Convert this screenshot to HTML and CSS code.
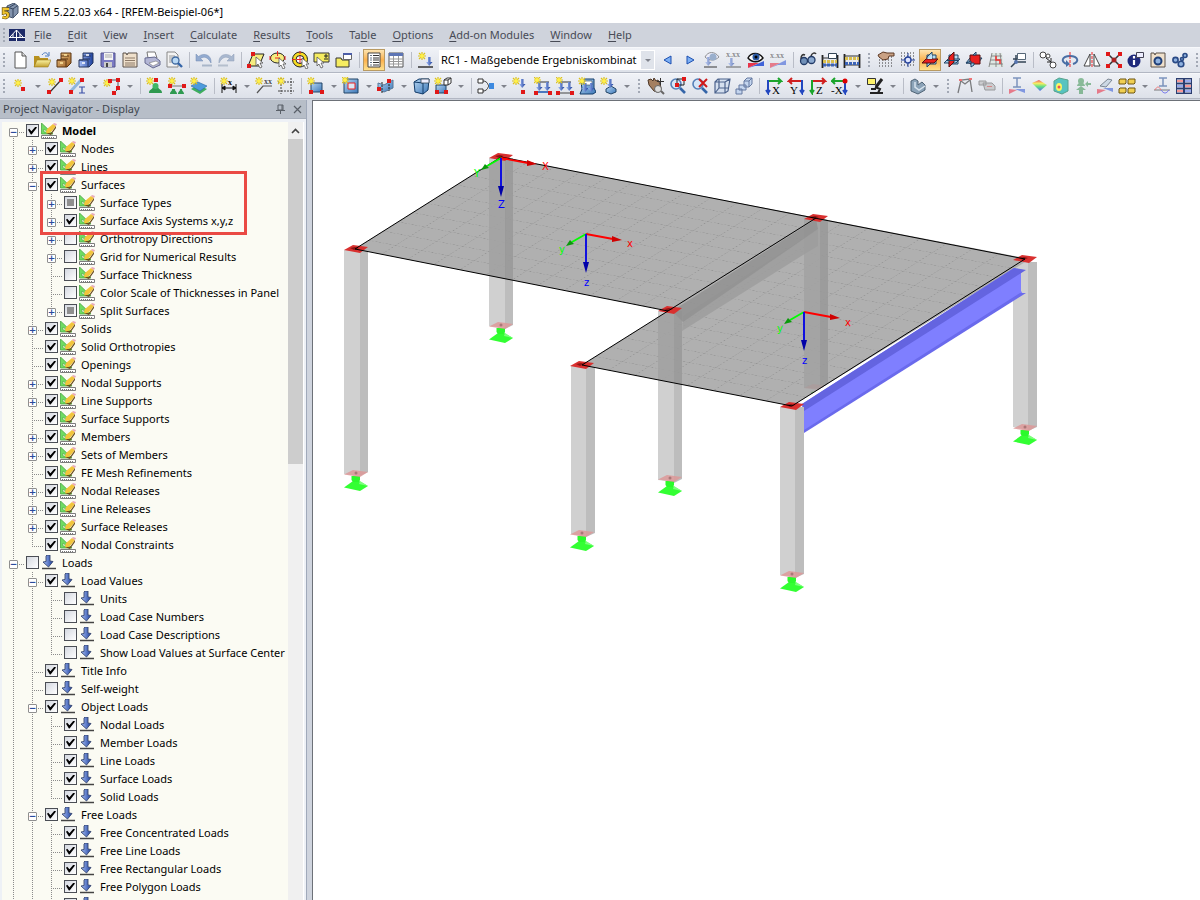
FILE: index.html
```html
<!DOCTYPE html>
<html lang="en">
<head>
<meta charset="utf-8">
<title>RFEM 5.22.03 x64 - [RFEM-Beispiel-06*]</title>
<link rel="stylesheet" href="styles.css">
</head>
<body>
<svg class="defs" aria-hidden="true">
  <defs>
    <linearGradient id="gb" x2="1" y2="1"><stop stop-color="#b5d6f3"/><stop offset="1" stop-color="#3d78b8"/></linearGradient>
    <linearGradient id="gy" x2="0" y2="1"><stop stop-color="#fbf3a0"/><stop offset="1" stop-color="#c2a02e"/></linearGradient>
    <linearGradient id="go" x2="1" y2="1"><stop stop-color="#f0c98c"/><stop offset="1" stop-color="#9a5c1c"/></linearGradient>
    <linearGradient id="ga" x2="1" y2="0"><stop stop-color="#a9c1fa"/><stop offset="1" stop-color="#1c3f9c"/></linearGradient>
    <linearGradient id="rb" x2="0" y2="1"><stop stop-color="#e23"/><stop offset=".3" stop-color="#fe3"/><stop offset=".6" stop-color="#3d6"/><stop offset="1" stop-color="#24e"/></linearGradient>
    <pattern id="mesh" width="26.7" height="17.3" patternUnits="userSpaceOnUse" patternTransform="matrix(.982 .19 -.846 .533 501 157)">
      <path d="M0 .5H27M.5 0V18" stroke="#949494" stroke-width="1" stroke-dasharray="1.5 2" fill="none"/>
    </pattern>
    <clipPath id="slabclip"><path d="M501 157L1030 259L792 406L582 365L668 311L355 249Z"/></clipPath>
    <symbol id="st" overflow="visible"><path d="M4 0v8M0 4h8M1 1l6 6M7 1L1 7" stroke="#dcc21a" stroke-width="1.2"/><circle cx="4" cy="4" r="2" fill="#fff04a"/></symbol>
    <symbol id="nd" overflow="visible"><path d="M-2-2h4v4h-4z" fill="#e01818"/></symbol>
    <symbol id="cur" overflow="visible"><path d="M0 0v9l2-2 2 4 2-1-2-4h3z" fill="#fff" stroke="#555" stroke-width=".8"/></symbol>
    <symbol id="dn" overflow="visible"><path d="M-1 0h2.500v5H3.500L.2 9-3 5h2z" fill="url(#ga)"/></symbol>
    <symbol id="draw" viewBox="0 0 16 16"><path d="M.5 0v11H12z" fill="#6fdc63" stroke="#49a542" stroke-width=".8"/><path d="M3 6v3h3.500z" fill="#fbfbf3" stroke="#49a542" stroke-width=".6"/><path d="M5 9l1-3 6-5 3 2-5 6-4 2z" fill="#f2c53c"/><path d="M5 10l5 0 5-7 0 2-5 7z" fill="#6b4c1c"/><path d="M12 1l1-1 3 1-1 2z" fill="#e7a6b8"/><path d="M.5 12.500h15v3H.5z" fill="#fff" stroke="#7d7d7d"/><path d="M2 14.500h12" stroke="#777" stroke-dasharray="1 1"/></symbol>
    <symbol id="load" viewBox="0 0 16 16"><path d="M5 1l1-1h3v6l3 .5L7.500 12 2 7l3-.5z" fill="url(#ga)" stroke="#35456e" stroke-width=".9"/><path d="M1 13.500h14" stroke="#444" stroke-width="1.500"/></symbol>
    <symbol id="foot" overflow="visible"><path d="M-12 14.500L-3 8H3l9 5-8 5z" fill="#3f3"/><path d="M-4.500 3h8.500v4l-1 2h-6l-1.500-2z" fill="#2bfa2b"/><path d="M4 8l8 5-9-2z" fill="#7dff7d"/><path d="M-12 1.500L-3-3 12-1 4 4z" fill="#d99" fill-opacity=".85"/><circle r="1.500" cy="0" fill="#a77"/></symbol>
    <symbol id="cap" overflow="visible"><path d="M-12 1L-3-4 12-2 4 4z" fill="#d9302f"/><path d="M-6-1l5-1 4 1-5 2z" fill="#8c1414"/></symbol>
    <symbol id="axes" overflow="visible">
      <path d="M0 0L27 5" stroke="red" stroke-width="1.800"/><path d="M26 2l10 4-10 2z" fill="#d00000"/>
      <path d="M0 0l-14 8" stroke="#0f0" stroke-width="1.800"/><path d="M-20 12l4-6 4 4z" fill="#0a9a0a"/>
      <path d="M0 0v30" stroke="#1010e0" stroke-width="2"/><path d="M-3 28h6l-3 11z" fill="#0000a8"/>
    </symbol>
  </defs>
</svg>

<header class="title">
  <svg width="18" height="18"><path d="M6 3l7-3 4 3v7l-5 5-6-2z" fill="#8293ad" stroke="#43536b"/><path d="M6 4l6 2 4-3M12 6v8M9 4l5-3" stroke="#34445e" fill="none"/><path d="M8 6H2.500v4c3-1 5 0 4.500 2.500C6.500 15 4 15 1.500 14" fill="none" stroke="#6b5310" stroke-width="3.400"/><path d="M8 6H2.500v4c3-1 5 0 4.500 2.500C6.500 15 4 15 1.500 14" fill="none" stroke="#f0c530" stroke-width="2"/></svg>
  <h1>RFEM 5.22.03 x64 - [RFEM-Beispiel-06*]</h1>
</header>

<nav class="menu" aria-label="Main menu">
  <i class="grip"></i>
  <svg width="16" height="12"><path d="M0 0h16v12H0z" fill="#1d2a68"/><path d="M0 8.500h16M7.500 1v11M7.500 1L1 8M7.500 1L14 8M4 8V5M11 8V5" stroke="#fff" fill="none"/></svg>
  <button><u>F</u>ile</button><button><u>E</u>dit</button><button><u>V</u>iew</button><button><u>I</u>nsert</button><button><u>C</u>alculate</button><button><u>R</u>esults</button><button><u>T</u>ools</button><button>Ta<u>b</u>le</button><button><u>O</u>ptions</button><button><u>A</u>dd-on Modules</button><button><u>W</u>indow</button><button><u>H</u>elp</button>
</nav>

<div class="bar" role="toolbar" aria-label="Standard">
  <i class="grip"></i>
  <button aria-label="New"><svg><path d="M4 1h7l4 4v12H4z" fill="#fff" stroke="#555"/><path d="M11 1v4h4" fill="#ddd" stroke="#555"/></svg></button>
  <button aria-label="Open"><svg><path d="M1 5h5l1 2h8v9H1z" fill="#b89220"/><path d="M4 9h14l-3 7H1z" fill="url(#gy)" stroke="#9a7b1d" stroke-width=".6"/><path d="M9 4c2-3 5-3 6 0m1-3v4h-4" fill="none" stroke="#4b7bc0"/></svg></button>
  <button aria-label="Open project"><svg><path d="M6 2h10v10l-4 4H2V9h4z" fill="url(#go)" stroke="#5b3510"/><path d="M2 9h9v7M6 5h8M6 8h7" stroke="#5b3510" fill="none"/><path d="M5 12h3M9 4h3" stroke="#ffe9a0" stroke-width="1.500"/></svg></button>
  <button aria-label="Project manager"><svg><path d="M6 2h10v10l-4 4H2V9h4z" fill="url(#ga)" stroke="#26365f"/><path d="M2 9h9v7M6 5h8M6 8h7" stroke="#26365f" fill="none"/><path d="M5 12h3M9 4h3" stroke="#fff" stroke-width="1.500"/></svg></button>
  <button aria-label="Save"><svg><path d="M2 2h14v14H3l-1-1z" fill="#7b7bc4" stroke="#55558c"/><path d="M5 2h9v7H5z" fill="#f4f4f4"/><path d="M6 4h7M6 6h7" stroke="#aaa"/><path d="M5 11h8v5H5z" fill="#ccc"/><path d="M7 12h2v4H7z" fill="#444"/></svg></button>
  <button aria-label="Project contents"><svg><path d="M2 2h3l1 2 1-2h9v14H2z" fill="#efe0cb" stroke="#5a5048"/><path d="M4 7h10M4 9.500h10M4 12h10M4 14h10" stroke="#8d7a68"/></svg></button>
  <button aria-label="Print"><svg><path d="M4 1h8l2 6H5z" fill="#fff" stroke="#777"/><path d="M2 7l10-1 5 4v4l-7 3-8-5z" fill="#b3b6d6" stroke="#666a90"/><path d="M6 12l7-2 3 2-6 3z" fill="#fff" stroke="#777" stroke-width=".6"/></svg></button>
  <button aria-label="Print preview"><svg><path d="M2 1h8l3 3v12H2z" fill="#f3f3f3" stroke="#888"/><path d="M4 5h6M4 7h4M4 9h4M4 11h4" stroke="#999"/><circle cx="10.500" cy="9.500" r="3.500" fill="#b8d8f4" stroke="#3f69a0" stroke-width="1.300"/><path d="M13 12l4 4" stroke="#3465a8" stroke-width="2.400"/></svg></button>
  <i class="sep"></i>
  <button aria-label="Undo"><svg><path d="M1 3v7h7L5.500 7.500C9 5 13 6 16 12c1-8-7-11-12.500-6.500z" fill="#93abd0" stroke="#7088b0" stroke-width=".5"/><path d="M7 14.500h10" stroke="#a9b6c9" stroke-width="2"/></svg></button>
  <button aria-label="Redo"><svg><path d="M17 3v7h-7l2.500-2.500C9 5 5 6 2 12 1 4 9 1 14.500 5.500z" fill="#a9b8cf" stroke="#8c9cb6" stroke-width=".5"/><path d="M1 14.500h10" stroke="#b5bfcd" stroke-width="2"/></svg></button>
  <i class="sep"></i>
  <button aria-label="Select by rhomboid"><svg><path d="M6 3h11l-5 12H1z" fill="#f5ec80" stroke="#222"/><use href="#cur" x="9" y="6"/><use href="#nd" x="6" y="3"/><use href="#nd" x="2" y="15"/></svg></button>
  <button aria-label="Select by ellipse"><svg><ellipse cx="8.500" cy="7" rx="7" ry="5" fill="#f5ec80" stroke="#222"/><path d="M8.500 0v5M1 5v4M16 5v4M6 7h5" stroke="#e22"/><use href="#cur" x="10" y="7"/></svg></button>
  <button aria-label="Select by ring"><svg><circle cx="9" cy="8.500" r="7.500" fill="#f7dc22" stroke="#222"/><circle cx="9" cy="8.500" r="4" fill="#fff" stroke="#222"/><path d="M9 5v7M5.500 8.500h7M9 0v3M1 8.500h3" stroke="#e22"/><use href="#cur" x="11" y="7"/></svg></button>
  <button aria-label="Special selection"><svg><path d="M1 2h15v9H1z" fill="#f5ec60" stroke="#333"/><path d="M13 3v4M11 5h4M11 8h4" stroke="#222"/><use href="#cur" x="4" y="6"/></svg></button>
  <button aria-label="Visibility"><svg><path d="M1 7h5l1 2h7v7H1z" fill="#f5ec60" stroke="#333"/><path d="M8.500 2.500h8v6h-8z" fill="#fff" stroke="#666"/><path d="M8 2h9v2H8z" fill="#4c5ea8"/></svg></button>
  <i class="sep"></i>
  <button class="on" aria-label="Navigator"><svg><path d="M3 2h12v14H3z" fill="#fff" stroke="#444"/><path d="M8 4.500h6M8 7h6M8 9h6M8 11.500h6M8 14h6" stroke="#333"/><path d="M5 4.500h2M5 7h2M5 9h2M5 11.500h2M5 14h2" stroke="#678"/></svg></button>
  <button aria-label="Tables"><svg><path d="M2 2h14v14H2z" fill="#fff" stroke="#555"/><path d="M2 2h14v3H2z" fill="#5d75b5"/><path d="M2 8h14M2 10.500h14M2 13h14M6.500 5v11M11.500 5v11" stroke="#999"/></svg></button>
  <i class="sep"></i>
  <button aria-label="New load case"><svg><use href="#st" x="1" y="1"/><use href="#dn" x="12" y="6"/><path d="M1 16h15" stroke="#333" stroke-width="1.500"/></svg></button>
  <div class="case"><select aria-label="Load case"><option>RC1 - Maßgebende Ergebniskombinat</option></select><i class="dd"></i></div>
  <button aria-label="Previous"><svg><path d="M5 9l7-4v8z" fill="#7db0f5" stroke="#1c4fb0"/></svg></button>
  <button aria-label="Next"><svg><path d="M13 9L6 5v8z" fill="#7db0f5" stroke="#1c4fb0"/></svg></button>
  <button class="dim" aria-label="Show loads"><svg><path d="M2 6c3-6 10-6 14 0-4 4-10 4-14 0z" fill="#eef" stroke="#555"/><circle cx="10" cy="6" r="3.500" fill="#6688b5"/><use href="#dn" x="5" y="6"/><path d="M1 16h13" stroke="#555" stroke-width="2"/></svg></button>
  <button class="dim" aria-label="Load values"><svg><text x="1" y="6" class="tiny">x.xx</text><use href="#dn" x="6" y="7"/><path d="M1 16h15" stroke="#555" stroke-width="1.500"/></svg></button>
  <button aria-label="Show results"><svg><path d="M1 17L17 10v5H8z" fill="#4063d8"/><path d="M1 12h11L1 17z" fill="#e8344a"/><path d="M1 7c3-6 11-6 15 0-4 5-11 5-15 0z" fill="#fff" stroke="#111" stroke-width="1.400"/><circle cx="9" cy="6" r="3.500" fill="#2b5aa5"/><circle cx="9" cy="6" r="1.500"/></svg></button>
  <button class="dim" aria-label="Result values"><svg><text x="1" y="7" class="tiny">x.xx</text><path d="M1 17L17 9v5H9z" fill="#4063d8"/><path d="M1 12h10L1 17z" fill="#e8344a"/></svg></button>
  <i class="sep"></i>
  <button aria-label="Result display"><svg><path d="M2 8c0-4 2-5 4-4M12 5c1-3 4-4 5-2" stroke="#333" fill="none" stroke-width="1.500"/><circle cx="5" cy="10" r="3.500" fill="#7090b8" stroke="#223a66" stroke-width="1.300"/><circle cx="12.500" cy="9" r="3.500" fill="#8caad0" stroke="#223a66" stroke-width="1.300"/></svg></button>
  <button aria-label="Calculate selected"><svg><path d="M1.500 4v13M16.500 4v13" stroke="#222" stroke-width="1.800"/><path d="M1 7h16M1 14h16" stroke="#333"/><path d="M2 10.500h14" stroke="#d9bf4e" stroke-width="3" stroke-dasharray="3 1"/><path d="M2 14h14" stroke="#3a63b8" stroke-width="3" stroke-dasharray="3 1"/><path d="M7.500 2.500h8v5h-8z" fill="#fff" stroke="#345"/></svg></button>
  <button aria-label="Calculate all"><svg><path d="M1.500 3v14M16.500 3v14" stroke="#222" stroke-width="1.800"/><path d="M1 5h16M1 14h16" stroke="#333"/><path d="M2 7.500h14" stroke="#d9bf4e" stroke-width="3" stroke-dasharray="3 1"/><path d="M2 12.500h14" stroke="#3a63b8" stroke-width="3" stroke-dasharray="3 1"/></svg></button>
  <i class="grip wide"></i>
  <button aria-label="Work plane"><svg><path d="M2 9h14M2 12h14M2 15h14M2 6h14" stroke="#333" stroke-dasharray="1 2"/><path d="M1 4l5-3 4 1h7v3h-5l-1 3-5 1-4-3z" fill="#c9a184" stroke="#5d3a26"/></svg></button>
  <button aria-label="Grid"><svg><path d="M2 2h14M2 5h14M2 8h14M2 11h14M2 14h14" stroke="#333" stroke-dasharray="1 2"/><circle cx="9" cy="9" r="3" fill="#dfe6ff" stroke="#23409a" stroke-width="1.300"/><path d="M9 2v4M9 12v4M2 9h4M12 9h4" stroke="#23409a"/></svg></button>
  <button class="on" aria-label="Plane XY"><svg><path d="M6 4h9v9H6z" fill="#b5ddf2" stroke="#246"/><path d="M6 16V6l5-5v10z" fill="#9dcbe8" stroke="#246"/><path d="M1 12l4-4h12l-4 4z" fill="#e82020" stroke="#511"/><path d="M6 8l5-5v5z" fill="#c5e4f5"/></svg></button>
  <button aria-label="Plane YZ"><svg><path d="M6 4h9v9H6z" fill="#b5ddf2" stroke="#246"/><path d="M1 12l4-4h12l-4 4z" fill="#9dcbe8" stroke="#246"/><path d="M6 16V6l5-5v10z" fill="#e82020" stroke="#511"/><path d="M4 9.500h11" stroke="#246"/></svg></button>
  <button aria-label="Plane XZ"><svg><path d="M1 12l4-5h12l-4 5z" fill="#9dcbe8" stroke="#246"/><path d="M5 4h10v9H5z" fill="#e82020" stroke="#511"/><path d="M6 16v-6l-5 2h8v2zM8 4l3-3v3z" fill="#9dcbe8" stroke="#246"/></svg></button>
  <button aria-label="Line grid"><svg><path d="M5 2h10l2 14H1z" fill="#dfe8e4"/><path d="M5 2L2 16M9 2v14M13 2l2 14M4 5h11M3 9h12M2 13h14" stroke="#888"/><path d="M9 5v4h4v4" stroke="#e33" stroke-width="1.500" fill="none"/></svg></button>
  <button aria-label="Coordinate system"><svg><path d="M2 16l5-5V4m0 7h10M4 8h6" stroke="#345" fill="none" stroke-width="1.500"/><path d="M8.500 2.500h8v6h-8z" fill="#fff" stroke="#567"/><circle cx="7" cy="11" r="2" fill="#5775b0"/></svg></button>
  <i class="sep"></i>
  <button aria-label="Copy"><svg><circle cx="4" cy="4" r="3" fill="#fff" stroke="#444"/><circle cx="14" cy="14" r="3" fill="#fff" stroke="#444"/><circle cx="9" cy="5" r="2" fill="#fff" stroke="#444"/><path d="M7 7l5 4m-4 0h4V7" stroke="#222" fill="none"/></svg></button>
  <button aria-label="Rotate"><svg><path d="M12 13c7-2 5-8-3-8S-1 11 6 13" fill="none" stroke="#4a6fa5" stroke-width="2"/><path d="M5 9l4 4-4 3z" fill="#4a6fa5"/><path d="M9 1v16" stroke="#e22" stroke-dasharray="3 1"/></svg></button>
  <button aria-label="Mirror"><svg><path d="M7 3v12H1zM11 3v12h6z" fill="#fff" stroke="#444"/><path d="M9 1v16" stroke="#e22" stroke-dasharray="3 1"/></svg></button>
  <button aria-label="Explode"><svg><path d="M2 2l14 14M16 2L2 16" stroke="#333" stroke-width="1.500"/><circle cx="9" cy="9" r="2.500" fill="#a22"/><use href="#nd" x="3" y="3"/><use href="#nd" x="15" y="3"/><use href="#nd" x="3" y="15"/><use href="#nd" x="15" y="15"/></svg></button>
  <button aria-label="Info"><svg><circle cx="7" cy="10" r="6.500" fill="#1f2a7c"/><path d="M7 5v2.500M7 9v5" stroke="#fff" stroke-width="2.200"/><path d="M9.500 1.500h7v5h-7z" fill="#eef" stroke="#445"/></svg></button>
  <button aria-label="Report"><svg><path d="M2 2h3l1 2 1-2h9v14H2z" fill="#efe0cb" stroke="#5a5048"/><circle cx="9" cy="10" r="3.500" fill="#8fb2e0" stroke="#1f3f78" stroke-width="2"/></svg></button>
  <button aria-label="Settings"><svg fill="#8fb2e0" stroke="#2a4a85" stroke-width="1.600"><circle cx="4.500" cy="9" r="2.600"/><circle cx="14" cy="4.500" r="2"/><circle cx="10" cy="13" r="2.800"/><circle cx="11" cy="8" r="1.500"/></svg></button>
  <i class="grip wide"></i>
</div>

<div class="bar" role="toolbar" aria-label="Model">
  <i class="grip"></i>
  <button aria-label="New node"><svg><use href="#st" x="3" y="2"/><use href="#nd" x="12" y="12"/></svg></button><button class="more" aria-label="More nodes"></button>
  <button aria-label="New line"><svg><path d="M4 15L15 3" stroke="#333" stroke-width="1.200"/><use href="#st" x="2" y="1"/><use href="#nd" x="3" y="15"/><use href="#nd" x="15" y="3"/></svg></button>
  <button aria-label="New member"><svg><path d="M3 14L13 3" stroke="#8fb6dd" stroke-width="3"/><use href="#st"/><use href="#nd" x="3" y="15"/><use href="#nd" x="14" y="3"/><path d="M11 10h6M11 16h6M14 10v6" stroke="#3b50a8" stroke-width="1.200"/></svg></button><button class="more" aria-label="More members"></button>
  <button aria-label="New polyline"><svg><path d="M7 3h8v9l-4 4" fill="none" stroke="#555"/><use href="#st" x="0" y="2"/><use href="#nd" x="7" y="4"/><use href="#nd" x="15" y="3"/><use href="#nd" x="15" y="11"/><use href="#nd" x="11" y="16"/></svg></button><button class="more" aria-label="More lines"></button>
  <i class="sep"></i>
  <button aria-label="Nodal support"><svg><path d="M3 16c0-4 3-3 4-6h5c1 3 4 2 4 6z" fill="#2f9a50"/><circle cx="9.500" cy="9" r="3" fill="#3fb765"/><use href="#st"/><use href="#nd" x="10" y="3"/></svg></button>
  <button aria-label="Line support"><svg><path d="M3 9h13" stroke="#777"/><path d="M2 17c0-3 2-2 2-5h3c0 3 2 2 2 5zM10 17c0-3 2-2 2-5h2c0 3 2 2 2 5z" fill="#2f9a50"/><use href="#st"/><use href="#nd" x="2" y="9"/><use href="#nd" x="16" y="9"/></svg></button>
  <button aria-label="Surface support"><svg><path d="M1 12l7-4 9 4-7 5z" fill="#3fae5e"/><path d="M1 9l7-4 9 4-7 5z" fill="#4d9bdc" stroke="#2a6aa5" stroke-width=".6"/><use href="#st"/></svg></button>
  <i class="sep"></i>
  <button aria-label="Dimension"><svg><path d="M2 7v9M16 7v9M2 11h14M2 11l3-2v4zM16 11l-3-2v4z" stroke="#111" fill="#111"/><text x="8" y="8" class="tiny b">x</text><use href="#st"/></svg></button><button class="more" aria-label="More dimensions"></button>
  <button aria-label="Comment"><svg><path d="M2 16l6-7h9" fill="none" stroke="#555" stroke-width="1.200"/><text x="9" y="7" class="tiny">xx</text><use href="#st"/></svg></button>
  <button aria-label="Guide lines"><svg><path d="M4 1v16M14 1v16M1 5h16M1 14h16" stroke="#444" stroke-dasharray="2 1"/><use href="#st"/></svg></button>
  <i class="sep"></i>
  <button aria-label="New surface"><svg><path d="M4 6h11v9H4z" fill="url(#gb)" stroke="#246"/><use href="#st"/><use href="#nd" x="15" y="15"/><use href="#nd" x="4" y="15"/></svg></button><button class="more" aria-label="More surfaces"></button>
  <button aria-label="New opening"><svg><path d="M2 2h14v14H2z" fill="url(#gb)" stroke="#246"/><path d="M6 6h7v6H6z" fill="#dce8f4" stroke="#e22"/><use href="#st" x="-1" y="-1"/></svg></button><button class="more" aria-label="More openings"></button>
  <button aria-label="Divide"><svg><path d="M1 6l6 2 9-5v8l-9 4-6-3z" fill="url(#gb)" stroke="#579"/><path d="M5 5v11M12 4v10" stroke="#222" stroke-dasharray="2 1"/><use href="#nd" x="2" y="12"/><use href="#nd" x="12" y="4"/></svg></button><button class="more" aria-label="More editing"></button>
  <button aria-label="New solid"><svg><path d="M2 5l5-3h10l-1 11-5 4-8-2z" fill="url(#gb)" stroke="#123c6a"/><path d="M2 5l9 1v11" fill="none" stroke="#123c6a"/><path d="M9 2h8v4H9z" fill="#eef" stroke="#345" stroke-width=".8"/></svg></button>
  <button aria-label="New solid group"><svg><path d="M2 8h10v8H2z" fill="url(#gb)" stroke="#246"/><path d="M10 3l3-2h4v5l-3 2h-4zM10 3h4v5m0-5l3-2" fill="#fff" stroke="#333"/><use href="#st"/><use href="#nd" x="12" y="15"/><use href="#nd" x="3" y="15"/></svg></button><button class="more" aria-label="More solids"></button>
  <i class="sep"></i>
  <button aria-label="Combination"><svg><path d="M1 2h5v4H1zM1 12h5v4H1z" fill="#fff" stroke="#333"/><path d="M6 4c5 0 5 5 6 5-1 0-1 5-6 5" fill="none" stroke="#333"/><path d="M12 6h5v6h-5z" fill="#3d8ae0"/></svg></button><button class="more" aria-label="More combinations"></button>
  <button aria-label="Nodal load"><svg><use href="#st"/><use href="#dn" x="10" y="2"/><use href="#nd" x="11" y="15"/></svg></button>
  <button aria-label="Member load"><svg><path d="M3 5h12" stroke="#333"/><use href="#dn" x="5" y="5"/><use href="#dn" x="13" y="5"/><path d="M2 15h14" stroke="#4a78c0" stroke-width="2"/><use href="#st" x="-1" y="-1"/><use href="#nd" x="2" y="16"/><use href="#nd" x="16" y="16"/></svg></button>
  <button aria-label="Line load"><svg><path d="M3 5h12" stroke="#333"/><use href="#dn" x="5" y="5"/><use href="#dn" x="13" y="5"/><path d="M2 16h14" stroke="#444"/><use href="#st" x="-1" y="-1"/><use href="#nd" x="2" y="16"/><use href="#nd" x="16" y="16"/></svg></button>
  <button aria-label="Surface load"><svg><path d="M3 5l3-3h10v9l2 4-3 2H2l2-5z" fill="url(#gb)" stroke="#123c6a"/><path d="M6 4h8v4H6z" fill="#fff" stroke="#345" stroke-width=".6"/><use href="#dn" x="7" y="6"/><use href="#dn" x="13" y="6"/><use href="#st"/></svg></button>
  <button aria-label="Solid load"><svg><path d="M6 12l5-3 5 3v3l-5 2-5-2z" fill="url(#gb)" stroke="#246"/><use href="#dn" x="10" y="2"/><use href="#st"/></svg></button><button class="more" aria-label="More loads"></button>
  <i class="grip wide"></i>
  <button aria-label="Pan"><svg><path d="M1 3l3-1 2 2 1-3 2 3 2-1 2 4 1 4-4 4-3-1-5-6z" fill="#a47f60" stroke="#4c3525"/><path d="M13.500 1v7M10 4.500h7" stroke="#333"/><circle cx="11" cy="12" r="3.500" fill="#ddd" stroke="#666"/><path d="M14 14l3 3" stroke="#666" stroke-width="2"/></svg></button>
  <button aria-label="Zoom window"><svg><circle cx="7" cy="7" r="5" fill="#d5e6f7" stroke="#5580b8" stroke-width="1.600"/><path d="M11 11l5 5" stroke="#3465a8" stroke-width="2.600"/><path d="M8 2h7v6H8z" fill="none" stroke="#222"/><use href="#nd" x="8" y="8"/><use href="#nd" x="15" y="2"/></svg></button>
  <button aria-label="Zoom all"><svg><circle cx="7" cy="7" r="5" fill="#d5e6f7" stroke="#5580b8" stroke-width="1.600"/><path d="M11 11l5 5" stroke="#3465a8" stroke-width="2.600"/><path d="M8 2l8 8M16 2L8 10" stroke="#d01818" stroke-width="2"/></svg></button>
  <button aria-label="Isometric view"><svg><path d="M2 5l3-3h12l-2 12-3 2H2zM2 5h10v11m0-11l5-3M6 2v9h9M6 11l-4 5" fill="#c4d5ee" fill-opacity=".5" stroke="#4b628c" stroke-width="1.200"/></svg></button>
  <button aria-label="Perspective view"><svg><path d="M9 4l3-3h5v6l-3 3H9zM9 4h5v6M14 4l3-3M4 8h7v5H4zM1 12h6v5H1z" fill="#c4d5ee" stroke="#6479a0"/></svg></button>
  <i class="sep"></i>
  <button aria-label="View in X"><svg><path d="M3 4h13l-3-3m3 3l-3 3" stroke="#1ca52c" stroke-width="2" fill="none"/><path d="M3 3v13l-2-3m2 3l2-3" stroke="#2348c0" stroke-width="2" fill="none"/><text x="7" y="17" class="ax">X</text></svg></button>
  <button aria-label="View in Y"><svg><path d="M15 4H2l3-3M2 4l3 3" stroke="#d02020" stroke-width="2" fill="none"/><path d="M15 3v13l-2-3m2 3l2-3" stroke="#2348c0" stroke-width="2" fill="none"/><text x="3" y="17" class="ax">Y</text></svg></button>
  <button aria-label="View in Z"><svg><path d="M3 4h13l-3-3m3 3l-3 3" stroke="#d02020" stroke-width="2" fill="none"/><path d="M3 3v13l-2-3m2 3l2-3" stroke="#1ca52c" stroke-width="2" fill="none"/><text x="7" y="17" class="ax">Z</text></svg></button>
  <button aria-label="View in -X"><svg><path d="M13 4H1l3-3M1 4l3 3" stroke="#1ca52c" stroke-width="2" fill="none"/><path d="M14 3v13l-2-3m2 3l2-3" stroke="#2348c0" stroke-width="2" fill="none"/><circle cx="14" cy="4" r="2.500" fill="#d00"/><text x="0" y="17" class="ax">-X</text></svg></button><button class="more" aria-label="More views"></button>
  <button aria-label="Visibility mode"><svg><path d="M1.500 1.500h8v6h-8z" fill="#fff36a" stroke="#333"/><path d="M16 2l-6 8" stroke="#222" stroke-width="3"/><path d="M9 10l5 2-2 4M4 16h13M5 12h5" stroke="#222" stroke-width="2" fill="none"/></svg></button><button class="more" aria-label="More visibility"></button>
  <i class="sep"></i>
  <button aria-label="Rendering"><svg><path d="M2 4l4-2 3 2v4l4-3 3 3v5l-7 4-7-3z" fill="#8ba3b8" stroke="#4f6375"/><path d="M6 5v5l4 3 6-4" fill="none" stroke="#d8e4ee" stroke-width="1.500"/></svg></button><button class="more" aria-label="More rendering"></button>
  <i class="grip wide"></i>
  <button class="dim" aria-label="Deformation"><svg><path d="M2 16L5 3l9-1 2 13M5 4l4 3 5-4" fill="none" stroke="#333" stroke-width="1.300"/><path d="M3 3h3M13 2h3" stroke="#e22" stroke-width="2"/></svg></button>
  <button class="dim" aria-label="Animation"><svg><path d="M1 4h7v4H1zM5 6h9l3 3v4H7z" fill="#b8b8b8" stroke="#666"/><path d="M9 9.500h5" stroke="#c44"/></svg></button>
  <i class="sep"></i>
  <button class="dim" aria-label="Member results"><svg><path d="M5 1h8M9 1v9M5 10h8" stroke="#345a9a" stroke-width="1.500"/><path d="M1 12l8 1-8 4z" fill="#e8344a"/><path d="M17 12H7l10 4z" fill="#4063d8"/></svg></button>
  <button class="soft" aria-label="Surface results"><svg><path d="M2 6l7-3 8 5-7 6z" fill="url(#rb)"/></svg></button>
  <button class="soft" aria-label="Solid results"><svg><path d="M2 4l5-3 9 2v11l-6 3-8-3z" fill="#27b7b0" stroke="#2a8a6a"/><ellipse cx="7" cy="10" rx="3" ry="4" fill="#ff3"/><circle cx="7" cy="10" r="1.500" fill="#e22"/></svg></button>
  <button class="dim" aria-label="Support reactions"><svg><path d="M5 17v-4H2l5-4 5 4H9v4z" fill="#4a9a5e"/><path d="M3 9c0-2 2-2 2-4h4c0 2 2 2 2 4z" fill="#4a9a5e"/><circle cx="7" cy="4" r="3" fill="#4a9a5e"/><path d="M17 6h-3V4l-3 3 3 3V8h3z" fill="#4a9a5e"/></svg></button>
  <button class="dim" aria-label="Sections"><svg><path d="M4 9l8-7 4 1-6 7z" fill="#bcd" stroke="#345"/><path d="M1 12l9 1-9 4z" fill="#e8344a"/><path d="M17 11H7l10 4z" fill="#4063d8"/></svg></button>
  <button aria-label="Panels"><svg fill="#f0cf52" stroke="#6e5712"><path d="M1 3l1-1h6v4L7 7H1zM10 3l1-1h6v4l-1 1h-6zM1 12l1-1h6v4l-1 1H1zM10 12l1-1h6v4l-1 1h-6z"/></svg></button><button class="more" aria-label="More panels"></button>
  <button class="dim" aria-label="Result diagrams"><svg><path d="M6 1h8M10 1v8M6 9h8" stroke="#345a9a" stroke-width="1.500"/><path d="M1 13h16" stroke="#333"/><path d="M2 13c2-4 4-4 6 0" fill="none" stroke="#e33"/><path d="M8 13c3 4 5 4 8 0" fill="none" stroke="#33e"/></svg></button>
  <button aria-label="Result tables"><svg><path d="M1 1h16v16H1z" fill="#2b3d70"/><path d="M2 4h6M10 4h6M2 9h6M10 9h6M2 14h6M10 14h6" stroke="#fff" stroke-width="3"/><path d="M2 4h6M10 9h6M2 14h6" stroke="#e33"/><path d="M10 4h6M2 9h6M10 14h6" stroke="#35d"/></svg></button>
  <i class="sep"></i>
</div>

<main class="work">
  <aside class="nav">
    <div class="navhead"><h2>Project Navigator - Display</h2>
      <button aria-label="Pin"><svg width="9" height="10"><path d="M2 1h5v5H2zM0 6.500h9M4.500 7v3M6 1v5" fill="none" stroke="#5a6068"/></svg></button>
      <button aria-label="Close"><svg width="9" height="9"><path d="M1 1l7 7M8 1L1 8" stroke="#5a6068" stroke-width="1.200"/></svg></button>
    </div>
    <div class="pane">
      <ul class="tree">
        <li><div class="row"><button class="tw" aria-label="Collapse">−</button><label><input type="checkbox" checked><svg><use href="#draw"/></svg><b>Model</b></label></div>
          <ul>
            <li><div class="row"><button class="tw" aria-label="Expand">+</button><label><input type="checkbox" checked><svg><use href="#draw"/></svg>Nodes</label></div></li>
            <li><div class="row"><button class="tw" aria-label="Expand">+</button><label><input type="checkbox" checked><svg><use href="#draw"/></svg>Lines</label></div></li>
            <li><div class="row"><button class="tw" aria-label="Collapse">−</button><label><input type="checkbox" checked><svg><use href="#draw"/></svg>Surfaces</label></div>
              <ul>
                <li><div class="row"><button class="tw" aria-label="Expand">+</button><label><input type="checkbox" class="part"><svg><use href="#draw"/></svg>Surface Types</label></div></li>
                <li><div class="row"><button class="tw" aria-label="Expand">+</button><label><input type="checkbox" checked><svg><use href="#draw"/></svg>Surface Axis Systems x,y,z</label></div></li>
                <li><div class="row"><button class="tw" aria-label="Expand">+</button><label><input type="checkbox"><svg><use href="#draw"/></svg>Orthotropy Directions</label></div></li>
                <li><div class="row"><button class="tw" aria-label="Expand">+</button><label><input type="checkbox"><svg><use href="#draw"/></svg>Grid for Numerical Results</label></div></li>
                <li><div class="row"><label><input type="checkbox"><svg><use href="#draw"/></svg>Surface Thickness</label></div></li>
                <li><div class="row"><label><input type="checkbox"><svg><use href="#draw"/></svg>Color Scale of Thicknesses in Panel</label></div></li>
                <li><div class="row"><button class="tw" aria-label="Expand">+</button><label><input type="checkbox" class="part"><svg><use href="#draw"/></svg>Split Surfaces</label></div></li>
              </ul></li>
            <li><div class="row"><button class="tw" aria-label="Expand">+</button><label><input type="checkbox" checked><svg><use href="#draw"/></svg>Solids</label></div></li>
            <li><div class="row"><label><input type="checkbox" checked><svg><use href="#draw"/></svg>Solid Orthotropies</label></div></li>
            <li><div class="row"><label><input type="checkbox" checked><svg><use href="#draw"/></svg>Openings</label></div></li>
            <li><div class="row"><button class="tw" aria-label="Expand">+</button><label><input type="checkbox" checked><svg><use href="#draw"/></svg>Nodal Supports</label></div></li>
            <li><div class="row"><button class="tw" aria-label="Expand">+</button><label><input type="checkbox" checked><svg><use href="#draw"/></svg>Line Supports</label></div></li>
            <li><div class="row"><label><input type="checkbox" checked><svg><use href="#draw"/></svg>Surface Supports</label></div></li>
            <li><div class="row"><button class="tw" aria-label="Expand">+</button><label><input type="checkbox" checked><svg><use href="#draw"/></svg>Members</label></div></li>
            <li><div class="row"><button class="tw" aria-label="Expand">+</button><label><input type="checkbox" checked><svg><use href="#draw"/></svg>Sets of Members</label></div></li>
            <li><div class="row"><label><input type="checkbox" checked><svg><use href="#draw"/></svg>FE Mesh Refinements</label></div></li>
            <li><div class="row"><button class="tw" aria-label="Expand">+</button><label><input type="checkbox" checked><svg><use href="#draw"/></svg>Nodal Releases</label></div></li>
            <li><div class="row"><button class="tw" aria-label="Expand">+</button><label><input type="checkbox" checked><svg><use href="#draw"/></svg>Line Releases</label></div></li>
            <li><div class="row"><button class="tw" aria-label="Expand">+</button><label><input type="checkbox" checked><svg><use href="#draw"/></svg>Surface Releases</label></div></li>
            <li><div class="row"><label><input type="checkbox" checked><svg><use href="#draw"/></svg>Nodal Constraints</label></div></li>
          </ul></li>
        <li class="open"><div class="row"><button class="tw" aria-label="Collapse">−</button><label><input type="checkbox"><svg><use href="#load"/></svg>Loads</label></div>
          <ul>
            <li><div class="row"><button class="tw" aria-label="Collapse">−</button><label><input type="checkbox" checked><svg><use href="#load"/></svg>Load Values</label></div>
              <ul>
                <li><div class="row"><label><input type="checkbox"><svg><use href="#load"/></svg>Units</label></div></li>
                <li><div class="row"><label><input type="checkbox"><svg><use href="#load"/></svg>Load Case Numbers</label></div></li>
                <li><div class="row"><label><input type="checkbox"><svg><use href="#load"/></svg>Load Case Descriptions</label></div></li>
                <li><div class="row"><label><input type="checkbox"><svg><use href="#load"/></svg>Show Load Values at Surface Center</label></div></li>
              </ul></li>
            <li><div class="row"><label><input type="checkbox" checked><svg><use href="#load"/></svg>Title Info</label></div></li>
            <li><div class="row"><label><input type="checkbox"><svg><use href="#load"/></svg>Self-weight</label></div></li>
            <li><div class="row"><button class="tw" aria-label="Collapse">−</button><label><input type="checkbox" checked><svg><use href="#load"/></svg>Object Loads</label></div>
              <ul>
                <li><div class="row"><label><input type="checkbox" checked><svg><use href="#load"/></svg>Nodal Loads</label></div></li>
                <li><div class="row"><label><input type="checkbox" checked><svg><use href="#load"/></svg>Member Loads</label></div></li>
                <li><div class="row"><label><input type="checkbox" checked><svg><use href="#load"/></svg>Line Loads</label></div></li>
                <li><div class="row"><label><input type="checkbox" checked><svg><use href="#load"/></svg>Surface Loads</label></div></li>
                <li><div class="row"><label><input type="checkbox" checked><svg><use href="#load"/></svg>Solid Loads</label></div></li>
              </ul></li>
            <li class="open"><div class="row"><button class="tw" aria-label="Collapse">−</button><label><input type="checkbox" checked><svg><use href="#load"/></svg>Free Loads</label></div>
              <ul>
                <li><div class="row"><label><input type="checkbox" checked><svg><use href="#load"/></svg>Free Concentrated Loads</label></div></li>
                <li><div class="row"><label><input type="checkbox" checked><svg><use href="#load"/></svg>Free Line Loads</label></div></li>
                <li><div class="row"><label><input type="checkbox" checked><svg><use href="#load"/></svg>Free Rectangular Loads</label></div></li>
                <li><div class="row"><label><input type="checkbox" checked><svg><use href="#load"/></svg>Free Polygon Loads</label></div></li>
                <li><div class="row"><label><input type="checkbox" checked aria-label="Further free loads"><svg><use href="#load"/></svg></label></div></li>
              </ul></li>
          </ul></li>
      </ul>
      <div class="scroll"><button aria-label="Scroll up"><svg width="9" height="6"><path d="M1 5l3.500-3.500L8 5" fill="none" stroke="#444" stroke-width="1.600"/></svg></button><i class="thumb"></i></div>
      <i class="mark"></i>
    </div>
  </aside>

  <section class="view" aria-label="Model view">
    <svg viewBox="313 101 887 799" preserveAspectRatio="xMinYMin slice">
      <g fill="#d0d0d0"><path d="M344 250h16v226l-16-2zM489 158h17v170l-17-2zM658 311h16v171l-16-2zM571 366h15v171l-15-3zM1013 262h16v168l-16-3z"/></g>
      <g fill="#bdbdbd"><path d="M360 250h8v222l-8 4zM505 158h8v167l-8 4zM674 311h8v168l-8 4zM586 366h9v167l-9 4zM1028 262h9v165l-9 4z"/></g>
      <path d="M501 157L1030 259L792 406L582 365L668 311L355 249Z" fill="#b0b0b0"/>
      <path d="M501 157L1030 259L792 406L582 365L668 311L355 249Z" fill="url(#mesh)"/>
      <g clip-path="url(#slabclip)" fill-opacity=".85">
        <path d="M489 157h17v130h-17zM658 311h16v90h-16zM804 219h16v169h-16z" fill="#a2a2a2"/>
        <path d="M505 157h8v130h-8zM674 311h8v90h-8zM820 219h8v169h-8z" fill="#999"/>
        <path d="M683 316L818 229v17l-15 9-121 76z" fill="#9d9d9d"/>
        <path d="M672 311L816 219l2 10-135 93z" fill="#929292"/>
        <path d="M804 388l9-4 15 2-8 4z" fill="#ab9c9c"/><path d="M811 392l8-1 3 5-8 1z" fill="#6cae70"/>
      </g>
      <path d="M802 404L1014 268l9 2-2 3v18l2 3-219 138z" fill="#7f7fff"/>
      <path d="M802 404L1014 268l12 2-222 141z" fill="#6464e0"/>
      <path d="M804 430L1020 293l6 0-222 140z" fill="#6a6aec"/>
      <path d="M780 407h16v170l-16-2z" fill="#d0d0d0"/><path d="M795 407h9v167l-9 4z" fill="#bdbdbd"/>
      <use href="#foot" x="356" y="473"/><use href="#foot" x="501" y="325"/><use href="#foot" x="670" y="478"/><use href="#foot" x="582" y="533"/><use href="#foot" x="792" y="574"/><use href="#foot" x="1025" y="427"/>
      <use href="#cap" x="356" y="249"/><use href="#cap" x="501" y="157"/><use href="#cap" x="670" y="310"/><use href="#cap" x="582" y="365"/><use href="#cap" x="792" y="406"/><use href="#cap" x="1025" y="259"/><use href="#cap" x="816" y="218"/>
      <path d="M501 157L1025 259L792 406L582 365L816 218M668 311L355 249L501 157" fill="none" stroke="#000"/>
      <use href="#axes" x="501" y="158"/><use href="#axes" x="586" y="234"/><use href="#axes" x="804" y="312"/>
      <g class="ltr">
        <g fill="red"><text x="542" y="170">X</text><text x="627" y="247">x</text><text x="845" y="326">x</text></g>
        <g fill="#0f0"><text x="474" y="177">Y</text><text x="559" y="253">y</text><text x="777" y="332">y</text></g>
        <g fill="#00f"><text x="498" y="208">Z</text><text x="584" y="286">z</text><text x="802" y="364">z</text></g>
      </g>
    </svg>
  </section>
</main>
</body>
</html>
```
FILE: styles.css
```css
* { box-sizing: border-box; }
body {
  margin: 0;
  height: 100vh;
  overflow: hidden;
  display: flex;
  flex-direction: column;
  background: #cfd4de;
  color: #000;
  font: 11px/18px "Noto Sans", "Open Sans", sans-serif;
}
.defs { position: absolute; width: 0; height: 0; }
button { border: 0; padding: 0; background: none; font: inherit; color: inherit; }
h1, h2 { margin: 0; font: inherit; }

.title { height: 23px; flex: none; display: flex; align-items: center; gap: 3px; padding-left: 1px; background: #fff; }
.menu { height: 24px; flex: none; display: flex; align-items: center; background: #cfd3dc; color: #484b56; }
.menu > svg { margin-right: 1px; }
.menu button { padding: 0 8px; }
.menu u { text-underline-offset: 2px; }

.grip { flex: none; width: 9px; height: 14px; background: repeating-linear-gradient(#a3a9b5 0 2px, transparent 2px 4px) 3px 0 / 2px 100% no-repeat; }
.grip.wide { width: 12px; background-position: 5px 0; }
.bar {
  height: 26px;
  flex: none;
  display: flex;
  align-items: center;
  overflow: hidden;
  background: linear-gradient(#f0f2f7, #dde1e9);
  border-top: 1px solid #f7f8fb;
  border-bottom: 1px solid #b2b7c3;
}
.bar button { flex: none; width: 22px; height: 22px; display: flex; align-items: center; justify-content: center; }
.bar svg { width: 18px; height: 18px; }
.bar .on { background: linear-gradient(#fde4b0, #fbb04c 50%, #fde08c); border: 1px solid #b99a62; }
.bar .dim svg { opacity: .6; }
.bar .soft svg { opacity: .75; }
.bar .more { width: 13px; }
.more::before, .dd::before { content: ""; border: 3px solid transparent; border-top-color: #80838c; border-bottom: 0; }
.sep { flex: none; width: 8px; height: 16px; background: linear-gradient(#b9bdc7, #b9bdc7) 4px 0 / 1px 100% no-repeat; }
.tiny { font: 8px "Liberation Serif", serif; }
.tiny.b { font-weight: bold; }
.ax { font: 11px "Liberation Serif", serif; }

.case { flex: none; width: 216px; height: 20px; margin: 0 2px; display: flex; background: #fff; }
.case select { flex: 1; min-width: 0; appearance: none; border: 0; padding: 0 0 0 2px; background: #fff; font: inherit; color: #000; }
.dd { width: 15px; display: flex; align-items: center; justify-content: center; background: #dfe3ea; border: 1px solid #fff; }

.work { flex: 1; min-height: 0; display: flex; gap: 5px; padding-top: 1px; }
.nav { flex: none; width: 307px; display: flex; flex-direction: column; border-right: 1px solid #a0a9ba; background: #eef1f6; }
.navhead { height: 19px; flex: none; display: flex; align-items: center; gap: 1px; padding: 0 1px 0 3px; background: #b7bec8; color: #40464f; border-bottom: 1px solid #a8afbb; }
.navhead h2 { flex: 1; }
.navhead button { width: 16px; display: flex; justify-content: center; }
.pane { position: relative; flex: 1; min-height: 0; display: flex; margin: 3px 2px 0 2px; background: #fbfbf3; overflow: hidden; }
.tree { flex: 1; min-width: 0; overflow: hidden; padding-left: 7px; }
ul { list-style: none; margin: 0; padding: 0; }
ul ul { padding-left: 19px; }
li { background: repeating-linear-gradient(#8c8c8c 0 1px, transparent 1px 2px) 4px 0 / 1px 100% no-repeat; }
li:last-child:not(.open) { background-size: 1px 10px; }
.tree > li:first-child { background-position: 4px 10px; }
.row { display: flex; align-items: center; justify-content: flex-start; height: 18px; padding-left: 17px; background: repeating-linear-gradient(90deg, #8c8c8c 0 1px, transparent 1px 2px) 4px 10px / 12px 1px no-repeat; }
.tw {
  flex: none; width: 9px; height: 9px; margin: 2px 8px 0 -17px;
  display: flex; align-items: center; justify-content: center;
  border: 1px solid #8f8f8f; border-radius: 1px; background: #fff;
  color: #2a4a9c; font: bold 9px/7px "DejaVu Sans", sans-serif;
}
label { display: flex; align-items: center; white-space: nowrap; }
label svg { flex: none; width: 16px; height: 16px; margin: 0 5px 0 2px; }
input { appearance: none; flex: none; width: 13px; height: 13px; margin: 0 0 1px; border: 1px solid #4b4e55; background: linear-gradient(135deg, #d4d8e0, #fff); display: grid; place-items: center; }
input:checked::before { content: ""; width: 9px; height: 8px; background: #000; clip-path: polygon(0 40%, 14% 28%, 38% 58%, 84% 0, 100% 12%, 40% 100%, 32% 100%); }
.part::before { content: ""; width: 7px; height: 7px; background: #8f8f8f; }
.scroll { flex: none; width: 16px; background: #f0f0f0; display: flex; flex-direction: column; border-right: 1px solid #fff; }
.scroll button { height: 17px; display: flex; align-items: center; justify-content: center; }
.thumb { height: 325px; background: #cdcdcd; }
.mark { position: absolute; left: 38px; top: 49px; width: 207px; height: 64px; border: 3px solid #ea4a44; }

.view { flex: 1; min-width: 0; background: #fff; border-left: 1px solid #6d7178; border-top: 1px solid #6d7178; }
.view svg { display: block; width: 100%; height: 100%; }
.ltr { font: 10px "DejaVu Sans", sans-serif; }
```
